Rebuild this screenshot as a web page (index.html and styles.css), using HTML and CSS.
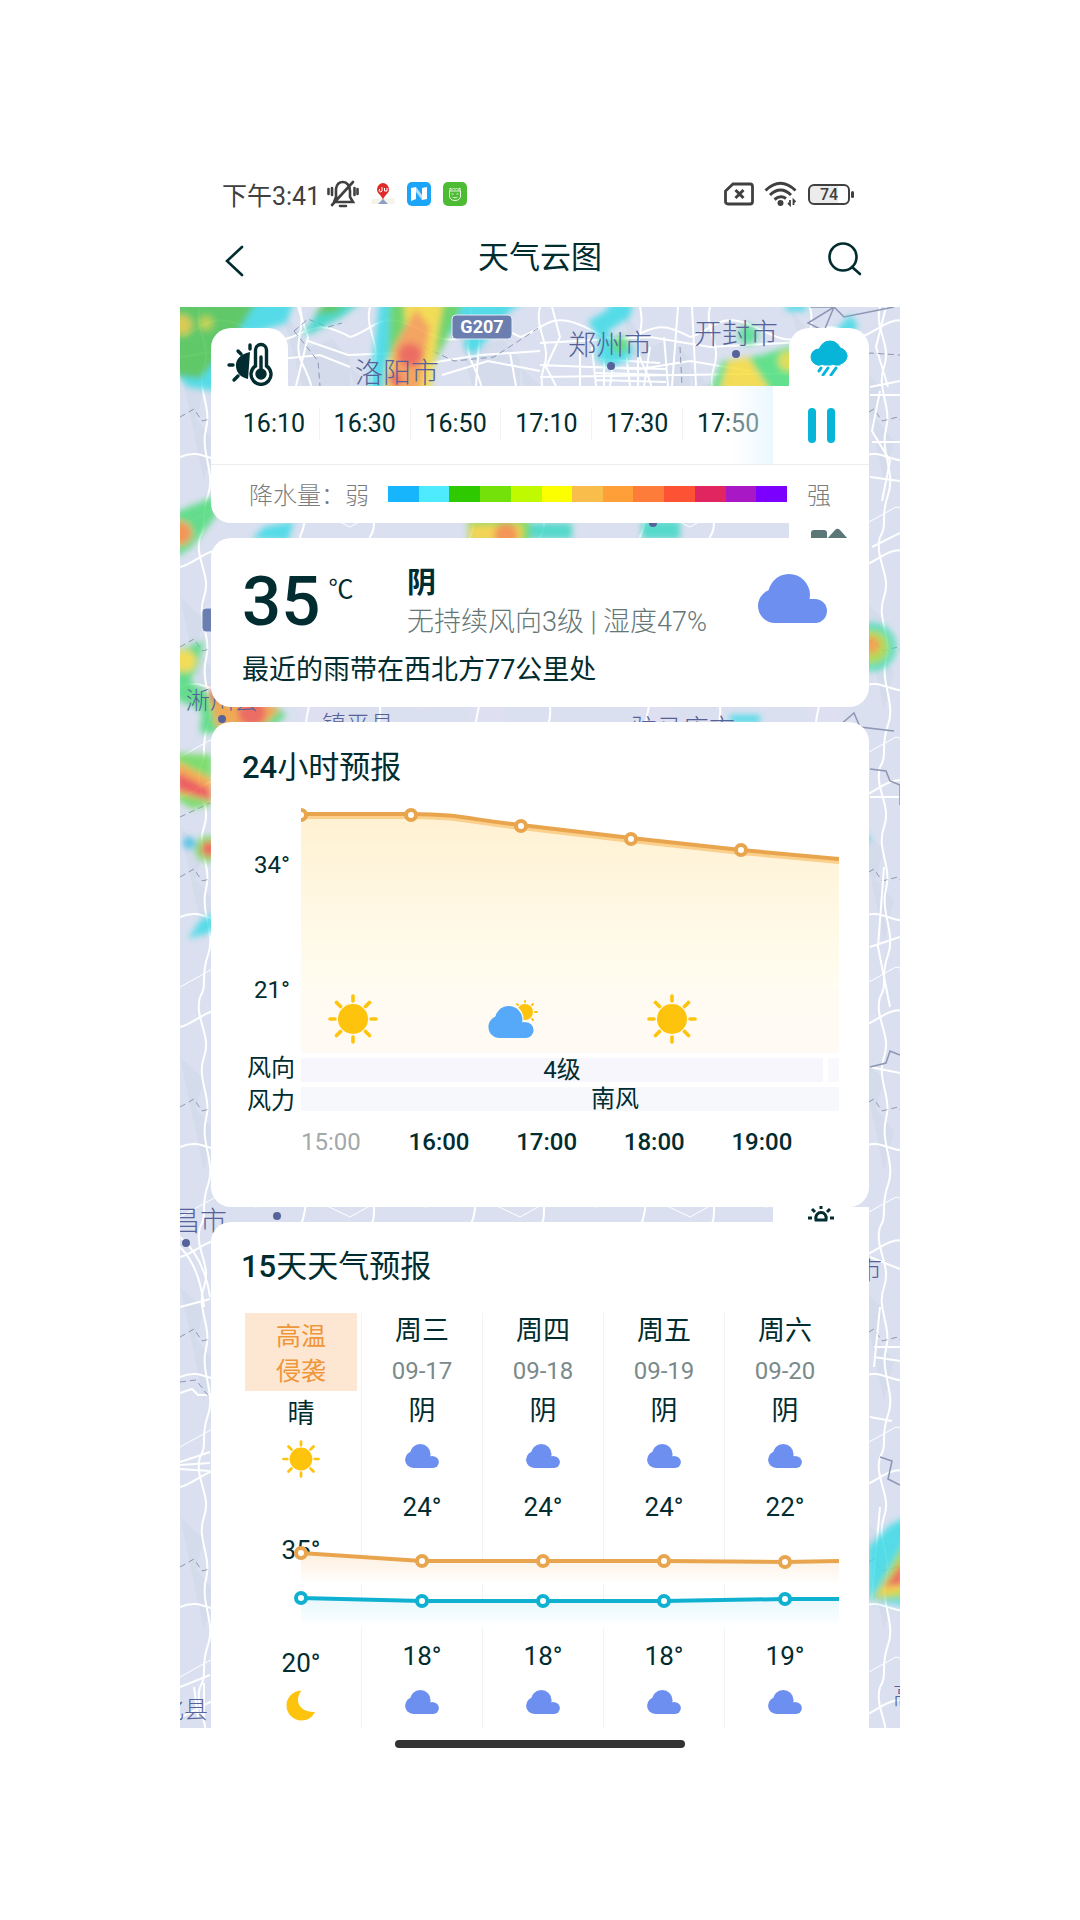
FILE: index.html
```html
<!DOCTYPE html>
<html lang="zh-CN">
<head>
    <meta charset="UTF-8">
    <meta name="viewport" content="width=device-width, initial-scale=1.0">
    <title>天气云图</title>
    <link rel="stylesheet" href="styles.css">
</head>
<body>
    <!-- shared icons -->
    <svg class="defs" width="0" height="0" aria-hidden="true">
        <symbol id="cloud" viewBox="0 0 69 49">
            <circle cx="31" cy="21" r="21"/>
            <circle cx="17" cy="32" r="17"/>
            <circle cx="57" cy="37" r="12"/>
            <rect x="17" y="25" width="40" height="24"/>
        </symbol>
        <symbol id="sun" viewBox="0 0 50 50">
            <circle cx="25" cy="25" r="15" fill="#fec30d"/>
            <g stroke="#fec30d" stroke-width="3.6" stroke-linecap="round">
                <path d="M25 2v5M25 43v5M2 25h5M43 25h5M8.500 8.500l4 4M37.500 37.500l4 4M41.500 8.500l-4 4M12.500 37.500l-4 4"/>
            </g>
        </symbol>
        <symbol id="moon" viewBox="0 0 30 31">
            <path d="M15.500 .5C7 .8 .5 7.500 .5 15.500S7 30.500 15.500 30.500c6 0 11-3.500 13.500-8.500C19 22.500 11.500 17 12 9.500c.1-3.500 1.500-6.500 3.500-9z" fill="#fec30d"/>
        </symbol>
    </svg>

    <div class="phone">
        <header class="status-bar">
            <span class="clock">下午3:41</span>
            <svg class="bell" width="32" height="28" viewBox="0 0 32 28" fill="none" stroke="#404040" stroke-width="2.600" stroke-linecap="round">
                <path d="M8 22h18l-3-5V11c0-5-3-9-7-9s-6.500 3-7 7v8l-2 5M5 25L26 2"/>
                <path d="M13 26h6M1.500 9v5M5 8v7M30.500 9v5M27.500 8v7"/>
            </svg>
            <svg class="pin" width="24" height="24" viewBox="0 0 24 24">
                <path d="M1 17l22-1 1 6H0z" fill="#f6f4ea"/>
                <path d="M7 22l5-5 5 5z" fill="#8aa0c8"/>
                <path d="M12 18C11 13 6 12 6 7.500a6 6.500 0 0 1 12 0C18 12 13 13 12 18z" fill="#e02a2a"/>
                <path d="M9 7a1.500 1.500 0 1 0 2 2V5M13.500 6v3h2.500V6" fill="none" stroke="#fff"/>
            </svg>
            <svg class="app" width="24" height="24" viewBox="0 0 24 24">
                <rect width="24" height="24" rx="5" fill="#1ba4f8"/>
                <path d="M4 6l5-1v12l-5 2zM15 6l5-1v12l-5 1z" fill="#fff"/>
                <path d="M9 5l6 8v5l-6-8z" fill="#b5dcfa"/>
            </svg>
            <svg class="app" width="24" height="24" viewBox="0 0 24 24">
                <rect width="24" height="24" rx="5" fill="#4dbb34"/>
                <path d="M6.500 9h11v5c0 3-2.500 4.500-5.500 4.500S6.500 17 6.500 14zM7 9V6l2 1.500L10.500 6 12 7.500 13.500 6 15 7.500 17 6v3M9.500 15c1.500 1 3.500 1 5 0M8.500 12h2M13.500 12h2" fill="none" stroke="#e4f8dd"/>
            </svg>
            <div class="status-right">
                <svg width="30" height="24" viewBox="0 0 30 24" fill="none" stroke="#404040" stroke-width="2.800">
                    <path d="M9 2h17q2.500 0 2.500 2.500v15q0 2.500-2.500 2.500H4q-2.500 0-2.500-2.500V9z"/>
                    <path d="M11.500 8l8 8M19.500 8l-8 8" stroke-width="3"/>
                </svg>
                <svg width="34" height="26" viewBox="0 0 34 26" fill="none" stroke="#404040" stroke-width="3">
                    <path d="M1.500 9.500Q16.500-5 31.500 9.500M6 14Q16.500 4 27 14M10.500 18.500q6-5 11.500-1"/>
                    <circle cx="16.500" cy="22" r="1.500"/>
                    <path d="M26 19v5l-2-2M29.500 24v-5l2 2" stroke-width="1.800"/>
                </svg>
                <span class="battery">74</span>
            </div>
        </header>

        <nav class="nav">
            <button class="icon-button" aria-label="返回">
                <svg width="36" height="36" viewBox="0 0 36 36" fill="none" stroke="#012c30" stroke-width="2.600" stroke-linecap="round"><path d="M26 5L11 19l15 14"/></svg>
            </button>
            <h1>天气云图</h1>
            <button class="icon-button" aria-label="搜索">
                <svg width="36" height="36" viewBox="0 0 36 36" fill="none" stroke="#012c30" stroke-width="2.600" stroke-linecap="round"><circle cx="15" cy="15" r="13.500"/><path d="M24 25l8 7"/></svg>
            </button>
        </nav>

        <main class="radar">
            <svg class="map" viewBox="0 0 720 1421" preserveAspectRatio="xMidYMin slice" aria-hidden="true">
                <defs>
                    <pattern id="roads" width="170" height="230" patternUnits="userSpaceOnUse">
                        <g fill="none">
                            <path d="M0 60l24 22-8 30 18 22-10 40M100 0l30 40 22-8 18 20v60l-30 30z" fill="#d4dbeb"/>
                            <path d="M60 90l30 20 14 40-34 26-20-30zM110 150l40 10 10 40-30 10z" fill="#dedff0"/>
                            <path d="M0 30C20 24 26 10 48 14S90 40 112 30s30-16 58 0M0 150c22-10 32 8 50 2s20-26 44-22 40 30 76 20" stroke="#fff" stroke-width="2"/>
                            <path d="M20 0c-6 22 12 38 4 60s8 38 2 62 10 44 2 66 0 30-8 42M120 0c6 24-8 36 2 56s14 30 6 54 6 42 0 64 2 34-8 56" stroke="#fff" stroke-width="2"/>
                            <path d="M0 220l36-20 40 10 44-14 50 24" stroke="#fff"/>
                            <path d="M0 110l14-8 8 12 16-4 12 16 18-4 8 18M92 80l10 10-4 14 16 8 2 14 18 2 8 12 20-4" stroke="#8f97ad" stroke-dasharray="6 4"/>
                        </g>
                    </pattern>
                    <filter id="soft" x="-10%" y="-10%" width="120%" height="120%"><feGaussianBlur stdDeviation="3"/></filter>
                </defs>
                <rect width="720" height="1421" fill="#dae0ef"/>
                <rect width="720" height="1421" fill="url(#roads)"/>

                <!-- city street grids -->
                <g fill="none" stroke="#fff" stroke-width="2">
                    <path d="M360 36l110-6 60 10 110-6M360 58l100 4 50-8 60 10M360 70l280-4M400 44v35M412 40l4 39M424 46v33M434 50l-4 29M446 46l4 33M458 44v35M470 40l-6 39M484 30l4 49M498 0l-6 79M512 0l4 79M420 52l60 4M416 60l70 2M416 66l70 2M416 73l70 2M372 0l8 30-14 30 10 19"/>
                    <path d="M0 50l40-6 40 10 60-6 30 12M118 0l10 30-12 49M128 34l40 14 50-2M250 56l50-8 60-4M262 68l46-14 52 10M300 20l-4 59M330 46l6 33"/>
                    <path d="M690 80l30-6M690 88h30M700 84l-8 40 18 30-8 40M692 135h28M690 170l30 4M706 0l-10 40 12 40M640 50l30 20M692 240l28-14M690 490h30M704 560l-6 80 12 60M690 760l30 6M690 640l30-10M690 950l30 12M700 1000l-6 60M694 1040h26M694 1050l26 4M690 1110l22 4M700 1200l-8 90"/>
                    <path d="M0 930q24 20 30 60M0 940q20 20 24 60M0 1000l30-8M0 1086l12-4 6 6h12M0 1158l30-2M0 1162l30 2M0 1155l30-10M0 1380l30-12M14 1380l4 30M24 1376v40"/>
                </g>
                <g fill="none" stroke="#8d96b5">
                    <path d="M630 0h24l10 10 50-10M654 0l-10 24-16-8zM690 462l16 2 4 10 10 4v20M700 1150l12 4-4 18 12 6M690 760l16-4 4-12 10 4M660 418l14-12 6 14 34 4" stroke-width="1.500"/>
                    <path d="M114 24l14-12 20 8 14-4M114 24l24 30 2 25M244 40l30 14 40-4 46-30M660 54h16l14-8 30 2M500 40l2 39M0 1075l16-2 14 18M0 510l30-14" stroke-dasharray="6 4"/>
                </g>

                <!-- rain echo -->
                <g class="echo" filter="url(#soft)">
                    <path d="M-10-10H116L106 16 60 30 34 84 8 80-10 60z" fill="#3edbe6"/>
                    <path d="M-10-10H80L60 22 34 56 20 72-10 68z" fill="#4dc452"/>
                    <circle cx="2" cy="18" r="10" fill="#d9c83a"/><circle cx="26" cy="16" r="7" fill="#b9cf3c"/>
                    <path d="M122 28l10-14 14-20h36l-20 16-30 16z" fill="#35d6c4"/><path d="M134 8l12-14h22l-12 12z" fill="#4dc452"/>
                    <path d="M200-10h150l-20 14-36 44-10-8 4-22-30 16-14 56h-56l4-30z" fill="#3edbe6"/>
                    <path d="M210-10h76l-16 36-16 30-4 34h-48l6-34z" fill="#5fd35a"/>
                    <path d="M224-10h40l-6 34-4 30-4 32h-46l4-32 18-30z" fill="#f8dc3c"/>
                    <path d="M236 2l14 18-4 24-6 40h-30l4-44z" fill="#f89a4c"/>
                    <circle cx="230" cy="48" r="12" fill="#f05a4c"/><circle cx="215" cy="72" r="7" fill="#f05a4c"/>
                    <path d="M408 14l18-10 8-14h20l-4 20-22 14 4 10 22 6-4 12-20 8-14-8 4-18z" fill="#3edbe6"/>
                    <circle cx="440" cy="38" r="9" fill="#4fdc74"/><circle cx="568" cy="28" r="10" fill="#4fe090"/>
                    <path d="M530 84l12-30 40-6 24-8 24-4v50z" fill="#4fe07c"/><path d="M540 84l8-30 20-4 22 34z" fill="#f8dc3c"/><circle cx="608" cy="54" r="10" fill="#dfdf40"/>
                    <path d="M650 30l20-22 8 10-8 14z" fill="#3edbe6"/><path d="M606-4h20v8h-20z" fill="#3edbe6"/>
                    <path d="M-4 205l40-16v20L12 240l-16 10z" fill="#4fdc7c"/><circle cx="0" cy="226" r="12" fill="#f88a3c"/>
                    <path d="M72 232l12-12 30-6-6 20z" fill="#3edbe6"/><path d="M288 212h62v24h-62z" fill="#6ed84c"/><path d="M290 218h52v16h-52z" fill="#f8d23c"/><circle cx="326" cy="228" r="12" fill="#f88a3c"/>
                    <path d="M350 216h42v16h-42zM462 214h38v18h-38z" fill="#3ed8c4"/>
                    <path d="M-4 344l28-10-6 26-8 14 20 14 66 10 10 10-18 18H20l2-22-26-12z" fill="#4fdc7c"/><circle cx="5" cy="354" r="11" fill="#f8dc3c"/>
                    <path d="M30 390l24-8 46 20-18 18H36z" fill="#f4a03c"/><circle cx="72" cy="406" r="14" fill="#f05a4c"/><circle cx="36" cy="388" r="7" fill="#f05a4c"/>
                    <path d="M-4 446l36 2v50l-20 4-16-10z" fill="#6edc5c"/><path d="M-4 454l36 18v22L-4 486z" fill="#f8a63c"/><path d="M-4 464l34 18v12L-4 482z" fill="#f04c4c"/>
                    <circle cx="28" cy="542" r="13" fill="#6edc5c"/><circle cx="29" cy="542" r="8" fill="#f05a4c"/><circle cx="9" cy="536" r="6" fill="#3ec0e4"/>
                    <path d="M8 632l12-18 14-8v18z" fill="#3edbe6"/>
                    <circle cx="692" cy="340" r="24" fill="#3edfb4"/><circle cx="692" cy="340" r="17" fill="#a8dc40"/><circle cx="691" cy="338" r="9" fill="#f89a3c"/>
                    <path d="M672 536l12-10 7 5-9 9z" fill="#3edbe6"/><path d="M550 408h30v8h-30z" fill="#3edbe6"/>
                    <path d="M688 1240l22-22 20-10v92l-42-8z" fill="#3edbe6"/><path d="M692 1292l34-60v60z" fill="#98dc40"/><path d="M696 1290l30-42v36z" fill="#f8d23c"/><path d="M704 1280l20-28v26z" fill="#f05a4c"/>
                </g>

                <g class="city">
                    <text x="175" y="76" font-size="28">洛阳市</text>
                    <text x="388" y="48" font-size="28">郑州市</text>
                    <text x="514" y="37" font-size="28">开封市</text>
                    <text x="6" y="402" font-size="24">淅川县</text>
                    <text x="142" y="426" font-size="24">镇平县</text>
                    <text x="451" y="431" font-size="26">驻马店市</text>
                    <text x="-7" y="924" font-size="27">昌市</text>
                    <text x="676" y="972" font-size="26">市</text>
                    <text x="-20" y="1411" font-size="24">化县</text>
                    <text x="713" y="1397" font-size="24">高</text>
                    <circle cx="431" cy="59" r="4"/><circle cx="556" cy="47" r="4"/>
                    <circle cx="473" cy="216" r="4"/><circle cx="42" cy="412" r="4"/>
                    <circle cx="97" cy="909" r="4"/><circle cx="6" cy="936" r="4"/>
                </g>
                <g class="road-sign">
                    <rect x="272" y="8" width="60" height="24" rx="4"/>
                    <rect x="22" y="301" width="60" height="24" rx="4"/>
                    <text x="302" y="26" text-anchor="middle">G207</text>
                </g>
            </svg>

            <div class="layers">
                <button class="layer" aria-label="气温">
                    <svg width="46" height="44" viewBox="0 0 46 44" fill="none" stroke="#012c30" stroke-width="3.400" stroke-linecap="round">
                        <path d="M23 10C13 12 8 18 9 25s5 10 12 12z" fill="#012c30" stroke="none"/>
                        <path d="M23 3v4M11 9l3 3M2 23h4M7 38l4-4"/>
                        <path d="M28.500 24V8a5.500 5.500 0 0 1 11 0v16a10 10 0 1 1-11 0z"/>
                        <path d="M34 15v14"/><circle cx="34" cy="32" r="4" fill="#012c30"/>
                    </svg>
                </button>
                <button class="layer layer-on" aria-label="降水">
                    <svg width="38" height="36" viewBox="0 0 38 36" fill="#06b5d8" stroke="#06b5d8" stroke-linecap="round">
                        <circle cx="20" cy="12" r="11"/><circle cx="9" cy="17" r="8"/><circle cx="29" cy="16" r="8"/><rect x="8" y="14" width="22" height="11"/>
                        <path d="M12 28L7 36M23 28l-5 8" stroke="#fff" stroke-width="6"/>
                        <path d="M11 28l-2 3M18 28l-5 7M26 28l-5 7" stroke-width="3"/>
                    </svg>
                </button>
            </div>

            <section class="card timeline">
                <div class="time-row">
                    <ol class="times">
                        <li>16:10</li>
                        <li>16:30</li>
                        <li>16:50</li>
                        <li>17:10</li>
                        <li>17:30</li>
                        <li>17:50</li>
                    </ol>
                    <button class="pause" aria-label="暂停"><i></i><i></i></button>
                </div>
                <div class="legend">
                    <span>降水量：弱</span>
                    <div class="scale"></div>
                    <span>强</span>
                </div>
            </section>

            <div class="gap">
                <div class="rail">
                    <svg width="38" height="10" viewBox="0 0 38 10" fill="#5b7777"><rect x="1" y="2" width="16" height="12" rx="3"/><path d="M17 11l8-9q2.500-2.500 5 0l8 9z"/></svg>
                </div>
            </div>

            <section class="card now">
                <div class="now-row">
                    <p class="temp">35<span>℃</span></p>
                    <div class="now-text">
                        <strong>阴</strong>
                        <p>无持续风向3级 | 湿度47%</p>
                    </div>
                    <svg class="now-cloud" width="69" height="49"><use href="#cloud"/></svg>
                </div>
                <p class="rain-note">最近的雨带在西北方77公里处</p>
            </section>

            <div class="gap"></div>

            <section class="card hourly">
                <h2><b>24</b>小时预报</h2>
                <div class="hourly-body">
                    <div class="axis">
                        <span class="degree">34°</span>
                        <span class="degree">21°</span>
                        <span>风向</span>
                        <span>风力</span>
                    </div>
                    <div class="plot">
                        <svg class="curve" viewBox="0 0 538 256">
                            <defs>
                                <linearGradient id="warm" x1="0" y1="0" x2="0" y2="1">
                                    <stop offset="0" stop-color="#fff1d2"/>
                                    <stop offset="0.720" stop-color="#fffdf1"/>
                                    <stop offset="0.740" stop-color="#fffaf2"/>
                                    <stop offset="1" stop-color="#fffaf3"/>
                                </linearGradient>
                            </defs>
                            <path d="M0 18h110c50 0 60 6 110 11l110 13 110 12 98 9v193H0z" fill="url(#warm)"/>
                            <path d="M0 20h110c50 0 60 6 110 11l110 13 110 12 98 9" fill="none" stroke="#fbd08c" stroke-width="4"/>
                            <path d="M0 17h110c50 0 60 6 110 11l110 13 110 12 98 9" fill="none" stroke="#e9a54e" stroke-width="4"/>
                            <g class="warm-dot"><circle cx="0" cy="18" r="5"/><circle cx="110" cy="18" r="5"/><circle cx="220" cy="29" r="5"/><circle cx="330" cy="42" r="5"/><circle cx="440" cy="53" r="5"/></g>
                            <use href="#sun" x="27" y="197" width="50" height="50"/>
                            <g transform="translate(224 215)" stroke="#fec30d" stroke-width="2" stroke-linecap="round">
                                <circle r="7" fill="#fec30d"/><path d="M0-10v-1M7-7l1-1M10 0h2M7 7l1 1M-7-7l-1-1"/>
                            </g>
                            <use href="#cloud" x="185" y="207" width="50" height="35" fill="#fffaf2"/>
                            <use href="#cloud" x="187" y="209" width="46" height="32" fill="#55a9f8"/>
                            <use href="#sun" x="346" y="197" width="50" height="50"/>
                        </svg>
                        <div class="wind wind-level">4级</div>
                        <div class="wind wind-dir">南风</div>
                        <ol class="hours">
                            <li class="past">15:00</li>
                            <li>16:00</li>
                            <li>17:00</li>
                            <li>18:00</li>
                            <li>19:00</li>
                        </ol>
                    </div>
                </div>
            </section>

            <div class="gap">
                <div class="rail rail-wide">
                    <svg width="26" height="16" viewBox="0 0 26 16" fill="none" stroke="#012c30" stroke-width="3"><path d="M8 14c-2-10 12-10 10 0zM13 0v3M4 3l3 3M22 3l-3 3M0 12h4M22 12h4"/></svg>
                </div>
            </div>

            <section class="card daily">
                <h2><b>15</b>天天气预报</h2>
                <div class="days">
                    <article class="day today">
                        <p class="alert">高温<br>侵袭</p>
                        <p class="sky">晴</p>
                        <div class="day-icon"><svg width="38" height="38"><use href="#sun"/></svg></div>
                        <p class="high">35°</p>
                        <p class="low">20°</p>
                        <div class="night-icon"><svg width="30" height="31"><use href="#moon"/></svg></div>
                    </article>
                    <article class="day">
                        <h3>周三</h3>
                        <time>09-17</time>
                        <p class="sky">阴</p>
                        <div class="day-icon"><svg width="34" height="24"><use href="#cloud"/></svg></div>
                        <p class="high">24°</p>
                        <p class="low">18°</p>
                        <div class="night-icon"><svg width="34" height="24"><use href="#cloud"/></svg></div>
                    </article>
                    <article class="day">
                        <h3>周四</h3>
                        <time>09-18</time>
                        <p class="sky">阴</p>
                        <div class="day-icon"><svg width="34" height="24"><use href="#cloud"/></svg></div>
                        <p class="high">24°</p>
                        <p class="low">18°</p>
                        <div class="night-icon"><svg width="34" height="24"><use href="#cloud"/></svg></div>
                    </article>
                    <article class="day">
                        <h3>周五</h3>
                        <time>09-19</time>
                        <p class="sky">阴</p>
                        <div class="day-icon"><svg width="34" height="24"><use href="#cloud"/></svg></div>
                        <p class="high">24°</p>
                        <p class="low">18°</p>
                        <div class="night-icon"><svg width="34" height="24"><use href="#cloud"/></svg></div>
                    </article>
                    <article class="day">
                        <h3>周六</h3>
                        <time>09-20</time>
                        <p class="sky">阴</p>
                        <div class="day-icon"><svg width="34" height="24"><use href="#cloud"/></svg></div>
                        <p class="high">22°</p>
                        <p class="low">19°</p>
                        <div class="night-icon"><svg width="34" height="24"><use href="#cloud"/></svg></div>
                    </article>
                    <!-- temperature lines over the columns -->
                    <svg class="lines" width="605" height="90" viewBox="0 0 605 90">
                        <defs>
                            <linearGradient id="under-high" x1="0" y1="0" x2="0" y2="1"><stop offset="0" stop-color="#fdeedd"/><stop offset="1" stop-color="#fff"/></linearGradient>
                            <linearGradient id="under-low" x1="0" y1="0" x2="0" y2="1"><stop offset="0" stop-color="#e6f8fd"/><stop offset="1" stop-color="#fff"/></linearGradient>
                        </defs>
                        <path d="M60 13l121 8h363l61-1v24H60z" fill="url(#under-high)"/>
                        <path d="M60 58l121 3h242l121-2h61v28H60z" fill="url(#under-low)"/>
                        <path d="M60 13l121 8h242l121 1 61-1" fill="none" stroke="#e9a54e" stroke-width="4"/>
                        <path d="M60 58l121 3h242l121-2h61" fill="none" stroke="#10b1d0" stroke-width="4"/>
                        <g class="warm-dot"><circle cx="60" cy="13" r="5"/><circle cx="181" cy="21" r="5"/><circle cx="302" cy="21" r="5"/><circle cx="423" cy="21" r="5"/><circle cx="544" cy="22" r="5"/></g>
                        <g class="cool-dot"><circle cx="60" cy="58" r="5"/><circle cx="181" cy="61" r="5"/><circle cx="302" cy="61" r="5"/><circle cx="423" cy="61" r="5"/><circle cx="544" cy="59" r="5"/></g>
                    </svg>
                </div>
            </section>
        </main>

        <div class="home-bar"></div>
    </div>
</body>
</html>
```
FILE: styles.css
```css
* {
    box-sizing: border-box;
    margin: 0;
    padding: 0;
}
body {
    font-family: Roboto, "Noto Sans CJK SC", sans-serif;
    font-size: 24px;
    color: #012c30;
    background-color: #fff;
    padding: 160px 0;
}
button {
    border: none;
    background: none;
    cursor: pointer;
}
ol {
    list-style: none;
}
svg {
    display: block;
    flex-shrink: 0;
}
.defs {
    position: absolute;
}
.phone {
    max-width: 720px;
    margin: 0 auto;
}

/* status bar */
.status-bar {
    display: flex;
    align-items: center;
    height: 70px;
    padding: 0 46px 2px 42px;
    color: #404040;
}
.clock {
    font-size: 25px;
    margin-right: 7px;
}
.pin {
    margin-left: 12px;
}
.app {
    margin-left: 12px;
}
.status-right {
    display: flex;
    align-items: center;
    gap: 10px;
    margin-left: auto;
}
.battery {
    position: relative;
    width: 42px;
    height: 21px;
    margin-right: 4px;
    border: 2px solid #404040;
    border-radius: 6px;
    background: linear-gradient(90deg, #ececec 74%, #fff 74%);
    font-size: 16px;
    font-weight: 500;
    line-height: 17px;
    text-align: center;
}
.battery::after {
    content: "";
    position: absolute;
    top: 5px;
    right: -6px;
    width: 3px;
    height: 7px;
    border-radius: 2px;
    background-color: #404040;
}

/* title bar */
.nav {
    display: flex;
    align-items: center;
    justify-content: space-between;
    height: 77px;
    padding: 0 36px 17px;
}
.nav h1 {
    font-size: 31px;
    font-weight: 400;
    line-height: 36px;
    padding-bottom: 5px;
}
.icon-button {
    width: 36px;
    height: 36px;
}

/* map */
.radar {
    position: relative;
    overflow: hidden;
    padding: 21px 31px 0;
}
.map {
    position: absolute;
    top: 0;
    left: 0;
    width: 100%;
    height: 100%;
}
.echo {
    opacity: 0.85;
}
.city {
    fill: #56639a;
    font-weight: 300;
}
.road-sign rect {
    fill: #6a7fb0;
    stroke: #e6ebf8;
    stroke-width: 1;
}
.road-sign text {
    fill: #fff;
    font-size: 18px;
    font-weight: 700;
}
.layers, .card, .gap {
    position: relative;
}
.layers {
    display: flex;
    justify-content: space-between;
}
.layer {
    display: flex;
    justify-content: center;
    width: 77px;
    height: 58px;
    padding-top: 14px;
    border-radius: 20px 20px 0 0;
    background-color: #fff;
}
.layer-on {
    width: 80px;
    padding-top: 12px;
}
.card {
    background-color: #fff;
    border-radius: 20px;
}
.gap {
    display: flex;
    justify-content: flex-end;
    height: 15px;
}
.rail {
    display: flex;
    align-items: flex-end;
    justify-content: center;
    width: 80px;
    background-color: #fff;
}
.rail-wide {
    width: 96px;
}

/* rain timeline */
.timeline {
    border-radius: 0 0 0 20px;
}
.time-row {
    display: flex;
    height: 79px;
    border-bottom: 1px solid #ebeeee;
}
.times {
    position: relative;
    display: flex;
    flex: 1;
    padding-left: 18px;
    overflow: hidden;
}
.times::after {
    content: "";
    position: absolute;
    top: 0;
    right: 0;
    width: 42px;
    height: 100%;
    background: linear-gradient(90deg, rgba(255, 255, 255, 0.4), rgba(222, 243, 253, 0.6));
}
.times li {
    flex: 1;
    align-self: center;
    font-size: 25px;
    line-height: 32px;
    text-align: center;
    margin-bottom: 2px;
}
.times li + li {
    border-left: 1px solid #f0f4f4;
}
.pause {
    display: flex;
    align-items: center;
    justify-content: center;
    gap: 11px;
    width: 96px;
}
.pause i {
    width: 8px;
    height: 35px;
    border-radius: 4px;
    background-color: #06b5d8;
}
.legend {
    display: flex;
    align-items: center;
    height: 58px;
    padding: 0 38px 1px;
    color: #7c7c7c;
    font-weight: 300;
}
.scale {
    flex: 1;
    height: 16px;
    margin: 0 20px 0 19px;
    background: linear-gradient(90deg,
        #17b5fb 0 7.7%, #4debfd 7.7% 15.4%, #2fc900 15.4% 23.1%, #74e20a 23.1% 30.8%,
        #c0fa00 30.8% 38.5%, #fbff00 38.5% 46.1%, #f9bd4c 46.1% 53.8%, #fe9f37 53.8% 61.5%,
        #fe7c3a 61.5% 69.2%, #fe5235 69.2% 76.9%, #e02560 76.9% 84.6%, #a818c4 84.6% 92.3%, #7c00fd 92.3%);
}

/* current weather */
.now {
    padding: 29px 31px 17px;
    border-top-right-radius: 0;
}
.now-row {
    display: grid;
    grid-template-columns: 165px 1fr auto;
    height: 83px;
}
.temp {
    display: flex;
    font-size: 69px;
    font-weight: 500;
    line-height: 70px;
}
.temp span {
    margin-left: 8px;
    font-size: 25px;
    line-height: 46px;
    font-weight: 400;
}
.now-text strong {
    display: block;
    font-size: 29px;
    line-height: 32px;
}
.now-text p {
    font-size: 27px;
    font-weight: 300;
    line-height: 46px;
    color: #647676;
    white-space: nowrap;
}
.now-cloud {
    margin: 7px 11px 0 0;
    fill: #6c8ff0;
}
.rain-note {
    font-size: 27px;
    line-height: 40px;
}

/* 24 hours */
h2 {
    font-size: 31px;
    font-weight: 400;
    line-height: 40px;
}
h2 b {
    font-weight: 500;
}
.hourly {
    padding: 26px 30px 50px 31px;
}
.hourly-body {
    display: flex;
    margin-top: 9px;
}
.axis {
    display: flex;
    flex-direction: column;
    width: 59px;
    padding-top: 53px;
    line-height: 30px;
}
.axis span {
    padding-left: 5px;
    margin-bottom: 3px;
}
.axis .degree {
    padding-left: 12px;
    margin-bottom: 95px;
}
.axis .degree + .degree {
    margin-bottom: 48px;
}
.plot {
    flex: 1;
    min-width: 0;
}
.curve {
    width: 100%;
    height: auto;
}
.warm-dot circle {
    fill: #fff;
    stroke: #e9a54e;
    stroke-width: 4;
}
.cool-dot circle {
    fill: #fff;
    stroke: #10b1d0;
    stroke-width: 4;
}
.wind {
    height: 24px;
    margin-top: 5px;
    line-height: 24px;
    text-align: center;
}
.wind-level {
    padding-right: 16px;
    background: linear-gradient(90deg, #f6f6fc 97%, #fff 97% 98%, #f9f9fd 98%);
}
.wind-dir {
    padding-left: 90px;
    background-color: #f7f8fc;
}
.hours {
    display: flex;
    margin-top: 16px;
    overflow: hidden;
}
.hours li {
    flex: 0 0 20%;
    font-weight: 500;
    line-height: 30px;
}
.hours .past {
    color: #a3a8a8;
    font-weight: 400;
}

/* 15 days */
.daily {
    padding: 25px 30px 0;
    border-radius: 20px 0 0 0;
}
.days {
    position: relative;
    display: flex;
    margin-top: 26px;
    overflow: hidden;
}
.day {
    flex: 0 0 121px;
    border-right: 1px solid #f1f4f4;
    text-align: center;
    font-size: 27px;
}
.day:nth-child(5) {
    border-color: transparent;
}
.day h3 {
    font-size: 27px;
    font-weight: 400;
    line-height: 36px;
}
.day time {
    display: block;
    font-size: 24px;
    line-height: 44px;
    color: #7a8a8a;
}
.alert {
    margin: 0 4px 5px;
    padding: 6px 0 2px;
    background-color: #fde7d2;
    color: #f0963a;
    font-size: 25px;
    line-height: 35px;
}
.sky {
    line-height: 36px;
}
.day-icon, .night-icon {
    display: flex;
    align-items: center;
    justify-content: center;
    height: 54px;
    fill: #6c8ff0;
}
.high {
    font-size: 26px;
    line-height: 48px;
}
.low {
    margin-top: 105px;
    font-size: 26px;
    line-height: 40px;
}
.night-icon {
    height: 52px;
}
.today .high {
    margin-top: 40px;
}
.today .low {
    margin-top: 69px;
}
.today .night-icon {
    height: 44px;
}
.lines {
    position: absolute;
    top: 227px;
    left: 0;
}

.home-bar {
    width: 290px;
    height: 8px;
    margin: 12px auto 0;
    border-radius: 4px;
    background-color: #333;
}
```
